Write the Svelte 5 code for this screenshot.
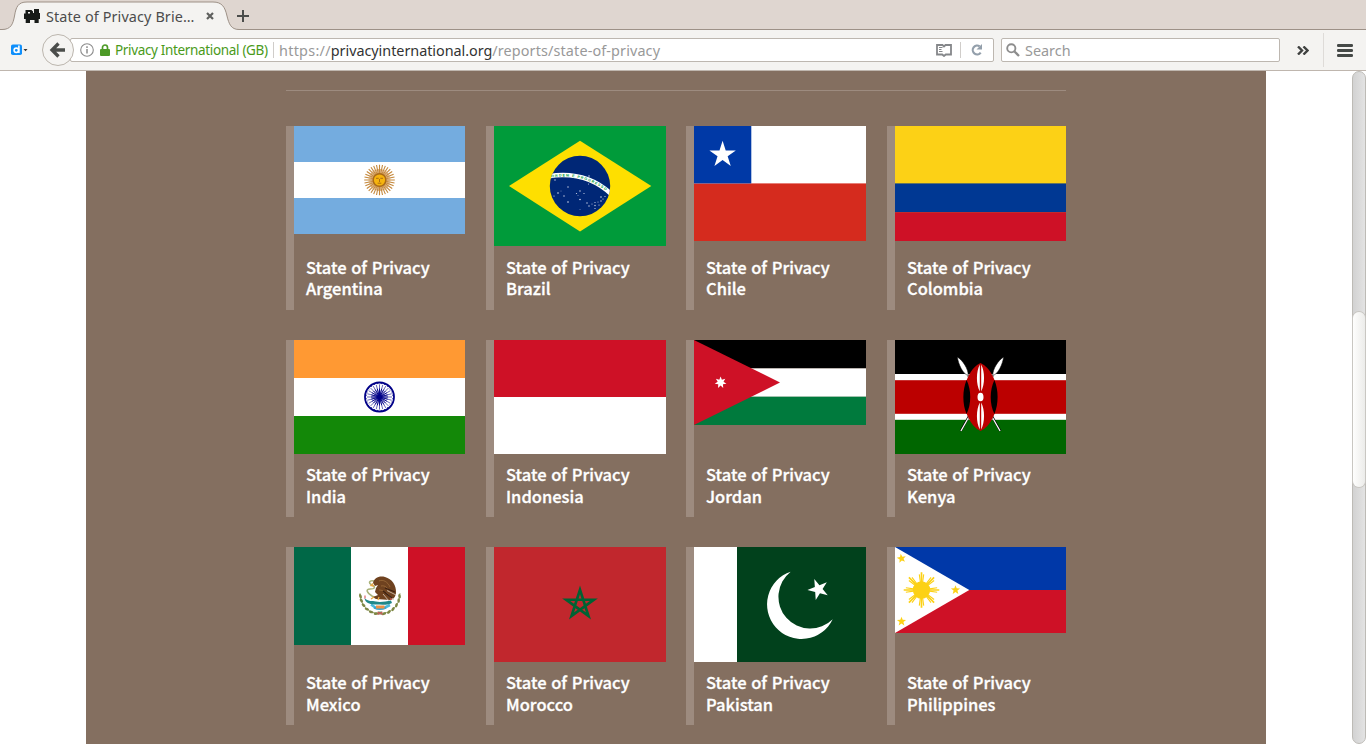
<script>
  const countries = [
    { name: 'Argentina', w: 171, h: 108 },
    { name: 'Brazil', w: 172, h: 120 },
    { name: 'Chile', w: 172, h: 115 },
    { name: 'Colombia', w: 171, h: 115 },
    { name: 'India', w: 171, h: 114 },
    { name: 'Indonesia', w: 172, h: 114 },
    { name: 'Jordan', w: 172, h: 85 },
    { name: 'Kenya', w: 171, h: 114 },
    { name: 'Mexico', w: 171, h: 98 },
    { name: 'Morocco', w: 172, h: 115 },
    { name: 'Pakistan', w: 172, h: 115 },
    { name: 'Philippines', w: 171, h: 86 }
  ];

  const polar = (cx, cy, r, deg) => {
    const a = (deg * Math.PI) / 180;
    return `${(cx + r * Math.cos(a)).toFixed(2)},${(cy + r * Math.sin(a)).toFixed(2)}`;
  };

  // Points of a star with n tips, the first one at the angle `start`
  function star(cx, cy, r, start = -90, n = 5, inner = 0.382) {
    const pts = [];
    for (let i = 0; i < n * 2; i++) {
      pts.push(polar(cx, cy, i % 2 ? r * inner : r, start + (i * 180) / n));
    }
    return pts.join(' ');
  }

  // Radial strokes between two radii
  function rays(cx, cy, r1, r2, n, start = 0) {
    let d = '';
    for (let i = 0; i < n; i++) {
      const a = start + (i * 360) / n;
      d += `M${polar(cx, cy, r1, a)}L${polar(cx, cy, r2, a)}`;
    }
    return d;
  }

  const pentagram = [0, 2, 4, 1, 3].map((i) => polar(86, 57.2, 14.4, -90 + i * 72)).join(' ');
  const brazilStars = [
    [61, 54, 0.7], [74, 61, 0.7], [64, 67, 0.8], [60, 70, 0.6], [67, 65, 0.4], [70, 70, 0.7], [74, 76, 0.8],
    [86, 65, 0.7], [82.5, 67.5, 0.6], [90, 67.5, 0.6], [84, 69.5, 0.4], [86, 73.5, 0.8], [95, 50, 0.7],
    [93, 77, 0.7], [95, 80, 0.7], [98, 78, 0.5], [101, 76.5, 0.6], [101, 79.5, 0.7], [101, 82.5, 0.6],
    [104, 76, 0.5], [105, 79, 0.6], [107, 75, 0.7], [107, 71, 0.8], [111, 70.5, 0.6], [109, 73, 0.6],
    [94.5, 58, 0.5], [86, 83.5, 0.4]
  ];
  const leaves = [175, 162, 147, 132, 117, 102, 78, 63, 48, 33, 18, 5];
</script>

{#snippet flag(name)}
  {#if name === 'Argentina'}
    <rect width="171" height="108" fill="#74acdf" />
    <rect y="36" width="171" height="36" fill="#fff" />
    <path d={rays(85.5, 54, 5, 15.3, 32)} stroke="#c4873a" stroke-width="1.1" />
    <path d={rays(85.5, 54, 5, 11, 32, 5.6)} stroke="#c98d45" stroke-width=".7" />
    <circle cx="85.5" cy="54" r="6.3" fill="#f6b40e" stroke="#a96a17" stroke-width="1.4" />
    <path d="M82 52.3h2.7M86.3 52.3H89M85.5 53v3M83.7 57.2h3.6" stroke="#a5670f" stroke-width=".9" />
  {:else if name === 'Brazil'}
    <rect width="172" height="120" fill="#009b3a" />
    <path d="M15 60 86 14.7 157.3 60 86 105.5Z" fill="#fedf00" />
    <clipPath id="globe"><circle cx="86" cy="60" r="30.2" /></clipPath>
    <circle cx="86" cy="60" r="30.2" fill="#002776" />
    <g clip-path="url(#globe)">
      <circle cx="68.8" cy="120" r="71" fill="none" stroke="#fff" stroke-width="4.5" />
    </g>
    <path id="motto" d="M57.6 51.5A69.7 69.7 0 0 1 116 68.2" fill="none" />
    <text class="motto"><textPath href="#motto" textLength="57" lengthAdjust="spacing">ORDEM E PROGRESSO</textPath></text>
    {#each brazilStars as [x, y, r]}
      <circle cx={x} cy={y} {r} fill="#d5dcec" />
    {/each}
  {:else if name === 'Chile'}
    <rect width="172" height="115" fill="#d52b1e" />
    <rect width="172" height="57.4" fill="#fff" />
    <rect width="57.3" height="57.4" fill="#0039a6" />
    <polygon points={star(28.6, 28.7, 13.9)} fill="#fff" />
  {:else if name === 'Colombia'}
    <rect width="171" height="115" fill="#fcd116" />
    <rect y="57.4" width="171" height="29" fill="#003893" />
    <rect y="86.2" width="171" height="28.8" fill="#ce1126" />
  {:else if name === 'India'}
    <rect width="171" height="114" fill="#ff9933" />
    <rect y="38" width="171" height="38" fill="#fff" />
    <rect y="76" width="171" height="38" fill="#138808" />
    <circle cx="85.5" cy="57" r="14.5" fill="none" stroke="#000088" stroke-width="1.8" />
    <path d={rays(85.5, 57, 2, 12.6, 24)} stroke="#000088" stroke-width=".6" />
    <path d={rays(85.5, 57, 2, 8.5, 24)} stroke="#000088" stroke-width=".9" />
    <path d={rays(85.5, 57, 13, 14, 24, 7.5)} stroke="#000088" stroke-width="1" />
    <circle cx="85.5" cy="57" r="2.7" fill="#000088" />
  {:else if name === 'Indonesia'}
    <rect width="172" height="57" fill="#ce1126" />
    <rect y="57" width="172" height="57" fill="#fff" />
  {:else if name === 'Jordan'}
    <rect width="172" height="28.4" fill="#000" />
    <rect y="28.4" width="172" height="28.4" fill="#fff" />
    <rect y="56.7" width="172" height="28.3" fill="#007a3d" />
    <path d="M0 0 86 42.5 0 85Z" fill="#ce1126" />
    <polygon points={star(26.6, 42.5, 6, -90, 7, 0.5)} fill="#fff" />
  {:else if name === 'Kenya'}
    <rect width="171" height="114" fill="#fff" />
    <rect width="171" height="34" fill="#000" />
    <rect y="40.2" width="171" height="33.6" fill="#bb0000" />
    <rect y="79.8" width="171" height="34.2" fill="#006600" />
    {#each [1, -1] as side}
      <g transform="translate(85.5 57) scale({side} 1)">
        <path d="M-19.8 34 -10 16.5M-12.5-22l2.5 5" stroke="#000" stroke-width="2.2" />
        <path d="M-19.6 34-6 10M-13.5-23l5 9" stroke="#fff" stroke-width="1.3" />
        <path d="M-23.2-40C-18-37-12-28-12.3-21.5C-18-23-22-33-23.2-40Z" fill="#fff" stroke="#000" stroke-width=".5" />
      </g>
    {/each}
    <path d="M85.5 23C95 27 103 43 103 57S95 87 85.5 91C76 87 68.3 71 68.3 57S76 27 85.5 23Z" fill="#b00" />
    <path d="M71.6 40C67.3 50 67.3 64 71.6 74C76.5 64 76.5 50 71.6 40ZM99.4 40C103.7 50 103.7 64 99.4 74C94.5 64 94.5 50 99.4 40Z" fill="#000" />
    <ellipse cx="85.5" cy="57" rx="3" ry="4.3" fill="#fff" />
    <path d="M84.8 24.5C81 32 81 44 84.8 51.5ZM86.2 24.5C90 32 90 44 86.2 51.5ZM84.8 62.5C81 70 81 82 84.8 89.5ZM86.2 62.5C90 70 90 82 86.2 89.5Z" fill="#fff" />
  {:else if name === 'Mexico'}
    <rect width="57.2" height="98" fill="#006847" />
    <rect x="57" width="57.2" height="98" fill="#fff" />
    <rect x="114" width="57" height="98" fill="#ce1126" />
    <path d="M66 46C66 59 75 66.5 86 66.5S106 59 106 46" fill="none" stroke="#a3ad76" stroke-width=".9" />
    {#each leaves as a}
      <ellipse rx="2.3" ry="1.3" fill="#7d8745" transform="translate({polar(86, 47.5, 19.6, a)}) rotate({a + 75})" />
    {/each}
    <path d="M77 57.500 82 61M90 61l6-3" stroke="#4cb9dc" stroke-width="2.600" />
    <path d="M80 60.500q6 3 12 0" fill="none" stroke="#3aa6cf" stroke-width="2" />
    <path d="M82 58.500h8.500v3H82Z" fill="#ed9145" />
    <path d="M70.500 51C74 55 78 53.500 82 54.500S92 54.500 97 53.500L98 56C93 59 89 57 84 57.500S73 57 71 53Z" fill="#20888a" />
    <path d="M80 34C75 33 74 36 78 38S81 42 76 42S73 46 78 49L82 51" fill="none" stroke="#a9b27a" stroke-width="1.500" />
    <path d="M79 36C80 31 85 28.500 91 30C98 32 102.500 38 102 46C101.500 50 99 53 96 53L89 52.500 82 52 79 50 84 48 81 45 82 41 84 38 81 39Z" fill="#6f421f" />
    <path d="M85 34c4-2 9 1 11 6M87 39c4-1 7 2 8 6M85 43c3 0 5 1 6 3" fill="none" stroke="#a3733f" stroke-width=".7" />
    <path d="M92 46 100 53M93 43.500 102 48M89 47 95 54" stroke="#d9cdbf" stroke-width=".8" />
    <path d="M89 44 98 51M91 41 101 45" stroke="#3b2011" stroke-width="1.200" />
    <path d="M79 36.500l-2 2 3 .500M80 50l-3 2M85 50l-1 3" stroke="#e9a843" stroke-width="1.300" fill="none" />
    <path d="M84 64.500h4v3h-4Z" fill="#5aa36a" />
    <path d="M83.500 65l5 2.500M88.500 65l-5 2.500M71 48.500v3M97 51v2" stroke="#d65256" stroke-width="1.100" />
  {:else if name === 'Morocco'}
    <rect width="172" height="115" fill="#c1272d" />
    <polygon points={pentagram} fill="none" stroke="#006233" stroke-width="2.7" stroke-miterlimit="10" />
  {:else if name === 'Pakistan'}
    <rect width="172" height="115" fill="#01411c" />
    <rect width="43" height="115" fill="#fff" />
    <path d="M96.7 24.7A34.5 34.5 0 1 0 138.7 72.3A31.8 31.8 0 1 1 96.7 24.7Z" fill="#fff" />
    <polygon points={star(124.4, 42.3, 11, 176)} fill="#fff" />
  {:else}
    <rect width="171" height="43" fill="#0038a8" />
    <rect y="43" width="171" height="43" fill="#ce1126" />
    <path d="M0 0 74.3 43 0 86Z" fill="#fff" />
    <circle cx="26.5" cy="43" r="8.7" fill="#fcd116" />
    <g stroke="#fcd116" fill="none">
      <path d={rays(26.5, 43, 8, 17.8, 8)} stroke-width="1.7" />
      <path d={rays(26.5, 43, 8, 15.8, 8, 8)} stroke-width="1.1" />
      <path d={rays(26.5, 43, 8, 15.8, 8, -8)} stroke-width="1.1" />
    </g>
    <polygon points={star(6.5, 11.5, 4.8, -100, 5, 0.42)} fill="#fcd116" />
    <polygon points={star(60.5, 43, 4.8, -162, 5, 0.42)} fill="#fcd116" />
    <polygon points={star(6.5, 74.5, 4.8, -90, 5, 0.42)} fill="#fcd116" />
  {/if}
{/snippet}

<div class="browser">
  <div class="tabs">
    <div class="tab">
      <svg class="tab-shape" width="250" height="30" viewBox="0 0 250 30">
        <path d="M0 30V29.5H2C11 29.5 13 24 14.5 16C16 7 18 2 27 2H213C222 2 225 7 227 16C229 24 231 29.5 239 29.5V30Z" fill="#f4f3f1" />
        <path d="M0 29.500H2C11 29.500 13 24 14.500 16C16 7 18 2 27 2H213C222 2 225 7 227 16C229 24 231 29.500 239 29.500H250" fill="none" stroke="#9d9187" />
      </svg>
      <svg class="favicon" width="16" height="14" viewBox="0 0 16 14">
        <path d="M1.500 1H7.500L9 2.500V4H10V0H15V4H16V10H14.700V14H10.500V11H6V14H1.700V10H0V4.500H1.500Z" fill="#171a18" />
        <path d="M4 3h2v1.500H4Z" fill="#f4f3f1" />
      </svg>
      <span class="tab-title">State of Privacy Brie…</span>
      <svg class="close" width="8" height="8" viewBox="0 0 8 8"><path d="M1 1 7 7M7 1 1 7" stroke="#5f605e" stroke-width="2.2" /></svg>
    </div>
    <svg class="new-tab" width="12" height="12" viewBox="0 0 12 12"><path d="M6 0V12M0 6H12" stroke="#4b4d4b" stroke-width="2" /></svg>
  </div>

  <div class="toolbar">
    <svg class="ext" width="18" height="12" viewBox="0 0 18 12">
      <rect x="0" y=".5" width="11" height="10.5" rx="1.8" fill="#0f8ffb" />
      <path d="M7.900 1.500V9" stroke="#fff" stroke-width="1.600" />
      <circle cx="5.3" cy="6.3" r="2.2" fill="none" stroke="#fff" stroke-width="1.6" />
      <path d="M12.500 5h4l-2 2.200Z" fill="#333" />
    </svg>
    <svg class="back" width="34" height="34" viewBox="0 0 34 34">
      <circle cx="17" cy="17" r="15.5" fill="#f5f4f2" stroke="#bcb6ae" />
      <path d="M17.500 10.500 11 17l6.500 6.500M11.500 17H24" fill="none" stroke="#4b4d4b" stroke-width="3.300" />
    </svg>
    <div class="urlbar">
      <svg class="info" width="14" height="14" viewBox="0 0 14 14">
        <circle cx="7" cy="7" r="6.3" fill="none" stroke="#8c8c8c" stroke-width="1.1" />
        <path d="M7 6v4.500M7 3.300v1.600" stroke="#8c8c8c" stroke-width="1.500" />
      </svg>
      <svg class="lock" width="10" height="12" viewBox="0 0 10 12">
        <path d="M2.500 6V3.500a2.500 2.500 0 0 1 5 0V6" fill="none" stroke="#4d9a27" stroke-width="1.700" />
        <rect y="5" width="10" height="7" rx="1" fill="#4d9a27" />
      </svg>
      <span class="owner">Privacy International (GB)</span>
      <i class="rule"></i>
      <span class="url"><span class="dim proto">https://</span><span class="host">privacyinternational.org</span><span class="dim path">/reports/state-of-privacy</span></span>
      <svg class="reader" width="16" height="13" viewBox="0 0 16 13">
        <path d="M1 1H6.500L8 2.500 9.500 1H15V10.500H9.800L8 12 6.200 10.500H1Z" fill="none" stroke="#85878a" stroke-width="1.800" />
        <path d="M3 3.500h3.500M3 5.500h2.500M3 7.500h3.500" stroke="#85878a" />
      </svg>
      <i class="rule second"></i>
      <svg class="reload" width="12" height="12" viewBox="0 0 12 12">
        <path d="M8.700 2.400A4.400 4.400 0 1 0 9.700 8.600" fill="none" stroke="#939fab" stroke-width="2.200" />
        <path d="M11 0V5.500H5.500Z" fill="#939fab" />
      </svg>
    </div>
    <div class="search">
      <svg width="14" height="14" viewBox="0 0 14 14">
        <circle cx="5.3" cy="5.3" r="4.1" fill="none" stroke="#8d8d8d" stroke-width="1.9" />
        <path d="M8.500 8.500 13 13" stroke="#8d8d8d" stroke-width="2.300" />
      </svg>
      <span>Search</span>
    </div>
    <svg class="more" width="12" height="9" viewBox="0 0 12 9"><path d="M1 .5 5 4.5 1 8.5M6.500 .5l4 4-4 4" fill="none" stroke="#3f4140" stroke-width="2.400" /></svg>
    <i class="divider"></i>
    <svg class="menu" width="16" height="13" viewBox="0 0 16 13"><path d="M1.300 1.500H14.700M1.300 6.500H14.700M1.300 11.500H14.700" stroke="#454947" stroke-width="2.800" stroke-linecap="round" /></svg>
  </div>

  <div class="viewport">
    <main>
      <hr />
      <div class="grid">
        {#each countries as c, i}
          <a class="card" class:tight={i < 4} href="#{c.name}" style="width:{c.w + 8}px">
            <svg class="flag" width={c.w} height={c.h} viewBox="0 0 {c.w} {c.h}">{@render flag(c.name)}</svg>
            <span class="title">State of Privacy<br />{c.name}</span>
          </a>
        {/each}
      </div>
    </main>
    <div class="scrollbar"><div class="thumb"></div></div>
  </div>
</div>

<style>
  :global(body) { overflow: hidden; background: #fff; }
  .browser { width: 1366px; height: 744px; display: flex; flex-direction: column; overflow: hidden; font-family: "Noto Sans", "Open Sans", sans-serif; font-size: 14.4px; }
  svg { display: block; flex: none; }
  .tabs { height: 30px; flex: none; display: flex; background: linear-gradient(#9d9187, #9d9187) bottom / 100% 1px no-repeat #dfd6d0; }
  .tab { width: 237px; height: 30px; position: relative; display: flex; align-items: center; box-sizing: border-box; padding-top: 2px; }
  .tab-shape { position: absolute; left: 0; top: 0; }
  .favicon, .tab-title, .close { position: relative; }
  .favicon { margin: 0 6px 0 24px; }
  .tab-title { width: 160px; color: #4c4c4c; white-space: nowrap; letter-spacing: .12px; }
  .new-tab { margin-top: 10px; position: relative; }
  .toolbar { height: 41px; flex: none; box-sizing: border-box; display: flex; align-items: center; background: #f4f3f1; border-bottom: 1px solid #bfb6ae; padding-left: 11px; }
  .ext { margin-right: 12px; }
  .back { margin-right: -5px; position: relative; z-index: 1; }
  .urlbar, .search { height: 24px; box-sizing: border-box; display: flex; align-items: center; background: #fff; border: 1px solid #bdb7b0; border-radius: 2px; white-space: nowrap; }
  .urlbar { width: 924px; padding-left: 9px; }
  .info { margin-right: 6px; }
  .lock { margin-right: 5px; }
  .owner { width: 158px; color: #4a9a1a; font-size: 13.5px; letter-spacing: -.34px; }
  .rule { width: 1px; height: 16px; background: #d0cdca; margin-right: 5px; }
  .url { width: 657px; }
  .dim { color: #999; }
  .proto { letter-spacing: .27px; }
  .host { color: #333; letter-spacing: -.04px; }
  .path { letter-spacing: .13px; }
  .rule.second { margin: 0 10px 0 8px; }
  .search { width: 279px; margin-left: 7px; padding-left: 4px; color: #999; }
  .search span { margin-left: 5px; }
  .more { margin-left: 17px; }
  .divider { width: 1px; height: 34px; margin: 0 13px 0 14px; background: #dedbd8; }
  .viewport { flex: 1; min-height: 0; display: flex; }
  main { width: 1180px; margin-left: 86px; background: #846f60; box-sizing: border-box; padding: 19px 200px 0; }
  hr { border: 0; height: 1px; margin: 0 0 35px; background: #9d8b7f; }
  .grid { display: grid; grid-template-columns: 200px 200px 201px 179px; grid-template-rows: 184px 177px 178px; row-gap: 30px; }
  .card { box-sizing: border-box; border-left: 8px solid #9d8b7f; display: flex; flex-direction: column; justify-content: space-between; text-decoration: none; }
  .title { color: #fff; padding: 0 0 10px 12px; font-family: "Noto Sans CJK SC", sans-serif; font-weight: 500; font-size: 16.5px; line-height: 22px; word-spacing: 1px; white-space: nowrap; -webkit-text-stroke: .3px #fff; }
  .tight .title { line-height: 21px; padding-bottom: 11px; }
  .motto { font: bold 3.6px "Liberation Sans", sans-serif; fill: #009b3a; }
  .scrollbar { margin-left: auto; width: 14px; box-sizing: border-box; border: 1px solid #bdbbb6; border-radius: 7px; background: linear-gradient(90deg, #d2d2d2, #e3e3e3); padding-top: 240px; }
  .thumb { height: 175px; border-radius: 6px; background: linear-gradient(90deg, #fefefd, #ececea); box-shadow: 0 0 0 1px #c9c7c2; }
</style>
